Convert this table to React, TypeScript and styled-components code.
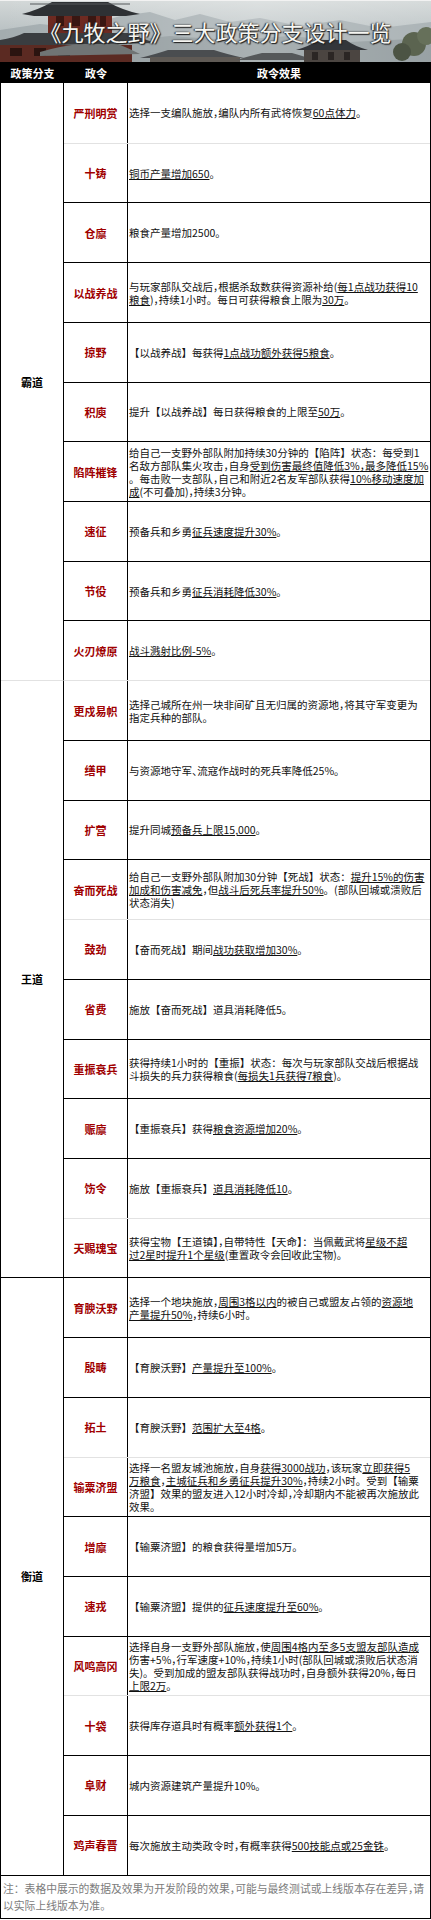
import React from 'react';
import styled, { createGlobalStyle } from 'styled-components';

const GlobalStyle = createGlobalStyle`
  html, body { margin: 0; padding: 0; background: #ffffff; }
  body { font-family: "Noto Sans CJK SC", "Noto Sans", sans-serif; }
`;

type LineKind = 'none' | 'dark' | 'faint';

const ROW_H = 1792 / 30;

const lineColor = (k: LineKind) =>
  k === 'none' ? 'none' : k === 'dark' ? '1px solid #000000' : '1px solid #e2e2e2';

const Page = styled.div`
  width: 431px;
  background: #ffffff;
`;

const Banner = styled.header`
  position: relative;
  height: 62px;
  overflow: hidden;
  display: flex;
  align-items: center;
  justify-content: center;
  background: #b9c0c2;
`;

const BannerArt = styled.svg`
  position: absolute;
  left: 0;
  top: 0;
  width: 100%;
  height: 100%;
`;

const Title = styled.h1`
  position: relative;
  margin: 0;
  font-family: "Noto Sans CJK SC", sans-serif;
  font-size: 22px;
  font-weight: 400;
  line-height: 1;
  color: #f6f6f2;
  white-space: nowrap;
  text-shadow: 0 0 2px #2a2a2a, 1px 1px 1px #1e1e1e, -1px 0 1px #3a3a3a;
  letter-spacing: 0;
`;

const Table = styled.section`
  border-left: 1px solid #000000;
  border-right: 1px solid #000000;
  border-bottom: 1px solid #000000;
`;

const HeaderRow = styled.div`
  display: flex;
  height: 21px;
  background: #000000;
  color: #ffffff;
  font-size: 11px;
  font-weight: 700;
`;

const HeaderCell = styled.div<{ $w?: number }>`
  ${(p) => (p.$w ? `width: ${p.$w}px;` : 'flex: 1;')}
  display: flex;
  align-items: center;
  justify-content: center;
`;

const Group = styled.div`
  display: flex;
`;

const GroupLabel = styled.div<{ $line: LineKind }>`
  width: 63px;
  flex-shrink: 0;
  box-sizing: border-box;
  border-right: 1px solid #000000;
  border-top: ${(p) => lineColor(p.$line)};
  display: flex;
  align-items: center;
  justify-content: center;
  font-size: 11px;
  font-weight: 700;
  color: #000000;
`;

const Rows = styled.div`
  flex: 1;
  display: flex;
  flex-direction: column;
`;

const Row = styled.div<{ $line: LineKind }>`
  display: flex;
  height: ${ROW_H}px;
  box-sizing: border-box;
  border-top: ${(p) => lineColor(p.$line)};
`;

const Name = styled.div`
  width: 64px;
  flex-shrink: 0;
  box-sizing: border-box;
  border-right: 1px solid #000000;
  display: flex;
  align-items: center;
  justify-content: center;
  color: #a00000;
  font-size: 11px;
  font-weight: 700;
`;

const Effect = styled.div`
  flex: 1;
  min-width: 0;
  display: flex;
  flex-direction: column;
  justify-content: center;
  padding: 0 1px 0 1px;
  font-size: 10.5px;
  line-height: 13px;
  color: #111111;
  white-space: nowrap;
  overflow: hidden;
`;

const Line = styled.div``;

const U = styled.span`
  text-decoration: underline;
  text-decoration-thickness: 1px;
  text-underline-offset: 1px;
`;

const Punct = styled.span`
  font-feature-settings: "halt";
`;

const Footer = styled.footer`
  height: 43px;
  box-sizing: border-box;
  border-top: 1px solid #000000;
  padding: 4px 2px 0 2px;
  font-size: 10.8px;
  line-height: 17px;
  color: #7c7c7c;
  white-space: nowrap;
`;

type Policy = { name: string; lines: string[]; line?: LineKind };
type Branch = { name: string; line: LineKind; items: Policy[] };

const branches: Branch[] = [
  {
    name: '霸道',
    line: 'none',
    items: [
      { name: '严刑明赏', lines: ['选择一支编队施放，编队内所有武将恢复_60点体力_。'] },
      { name: '十铸', lines: ['_铜币产量增加650_。'], line: 'faint' },
      { name: '仓廪', lines: ['粮食产量增加2500。'] },
      {
        name: '以战养战',
        lines: ['与玩家部队交战后，根据杀敌数获得资源补给(_每1点战功获得10', '粮食_)，持续1小时。每日可获得粮食上限为_30万_。'],
      },
      { name: '掠野', lines: ['【以战养战】每获得_1点战功额外获得5粮食_。'] },
      { name: '积庾', lines: ['提升【以战养战】每日获得粮食的上限至_50万_。'] },
      {
        name: '陷阵摧锋',
        lines: [
          '给自己一支野外部队附加持续30分钟的【陷阵】状态：每受到1',
          '名敌方部队集火攻击，自身_受到伤害最终值降低3%，最多降低15%_',
          '。每击败一支部队，自己和附近2名友军部队获得_10%移动速度加',
          '成_(不可叠加)，持续3分钟。',
        ],
      },
      { name: '速征', lines: ['预备兵和乡勇_征兵速度提升30%_。'] },
      { name: '节役', lines: ['预备兵和乡勇_征兵消耗降低30%_。'] },
      { name: '火刃燎原', lines: ['_战斗溅射比例-5%_。'] },
    ],
  },
  {
    name: '王道',
    line: 'faint',
    items: [
      {
        name: '更戍易帜',
        lines: ['选择己城所在州一块非间矿且无归属的资源地，将其守军变更为', '指定兵种的部队。'],
      },
      { name: '缮甲', lines: ['与资源地守军、流寇作战时的死兵率降低25%。'] },
      { name: '扩营', lines: ['提升同城_预备兵上限15,000_。'] },
      {
        name: '奋而死战',
        lines: [
          '给自己一支野外部队附加30分钟【死战】状态：_提升15%的伤害',
          '加成和伤害减免_，但_战斗后死兵率提升50%_。(部队回城或溃败后',
          '状态消失)',
        ],
      },
      { name: '鼓劲', lines: ['【奋而死战】期间_战功获取增加30%_。'], line: 'faint' },
      { name: '省费', lines: ['施放【奋而死战】道具消耗降低5。'] },
      {
        name: '重振衰兵',
        lines: ['获得持续1小时的【重振】状态：每次与玩家部队交战后根据战', '斗损失的兵力获得粮食(_每损失1兵获得7粮食_)。'],
      },
      { name: '赈廪', lines: ['【重振衰兵】获得_粮食资源增加20%_。'] },
      { name: '饬令', lines: ['施放【重振衰兵】_道具消耗降低10_。'] },
      {
        name: '天赐瑰宝',
        lines: ['获得宝物【王道镇】，自带特性【天命】：当佩戴武将_星级不超', '过2星时提升1个星级_(重置政令会回收此宝物)。'],
        line: 'faint',
      },
    ],
  },
  {
    name: '衡道',
    line: 'dark',
    items: [
      {
        name: '育腴沃野',
        lines: ['选择一个地块施放，_周围3格以内_的被自己或盟友占领的_资源地', '产量提升50%_，持续6小时。'],
      },
      { name: '殷畴', lines: ['【育腴沃野】_产量提升至100%_。'] },
      { name: '拓土', lines: ['【育腴沃野】_范围扩大至4格_。'] },
      {
        name: '输粟济盟',
        lines: [
          '选择一名盟友城池施放，自身_获得3000战功_，该玩家_立即获得5',
          '万粮食_，_主城征兵和乡勇征兵提升30%_，持续2小时。受到【输粟',
          '济盟】效果的盟友进入12小时冷却，冷却期内不能被再次施放此',
          '效果。',
        ],
        line: 'faint',
      },
      { name: '增廪', lines: ['【输粟济盟】的粮食获得量增加5万。'] },
      { name: '速戎', lines: ['【输粟济盟】提供的_征兵速度提升至60%_。'] },
      {
        name: '风鸣高冈',
        lines: [
          '选择自身一支野外部队施放，使_周围4格内至多5支盟友部队造成_',
          '伤害+5%，行军速度+10%，持续1小时(部队回城或溃败后状态消',
          '失)。受到加成的盟友部队获得战功时，自身额外获得20%，每日',
          '_上限2万_。',
        ],
      },
      { name: '十袋', lines: ['获得库存道具时有概率_额外获得1个_。'], line: 'faint' },
      { name: '阜财', lines: ['城内资源建筑产量提升10%。'] },
      { name: '鸡声春晋', lines: ['每次施放主动类政令时，有概率获得_500技能点或25金铢_。'] },
    ],
  },
];

// Narrow the comma-like punctuation, as the reference's font does.
function withPunct(text: string, keyBase: string) {
  return text.split(/([，、])/).map((piece, k) =>
    piece === '，' || piece === '、' ? (
      <Punct key={`${keyBase}-${k}`}>{piece}</Punct>
    ) : piece ? (
      <React.Fragment key={`${keyBase}-${k}`}>{piece}</React.Fragment>
    ) : null
  );
}

// Underline state carries across lines: text between "_" markers is underlined.
function renderLines(lines: string[]) {
  let underlined = false;
  return lines.map((ln, i) => {
    const parts = ln.split('_');
    const nodes = parts.map((part, j) => {
      if (j > 0) underlined = !underlined;
      if (!part) return null;
      const content = withPunct(part, `${i}-${j}`);
      return underlined ? <U key={j}>{content}</U> : <React.Fragment key={j}>{content}</React.Fragment>;
    });
    return <Line key={i}>{nodes}</Line>;
  });
}

const BannerScene: React.FC = () => (
  <BannerArt viewBox="0 0 431 62" preserveAspectRatio="none" aria-hidden="true">
    <defs>
      <linearGradient id="sky" x1="0" y1="0" x2="0" y2="1">
        <stop offset="0" stopColor="#d3d8d8" />
        <stop offset="0.55" stopColor="#b7bfc1" />
        <stop offset="1" stopColor="#9aa3a5" />
      </linearGradient>
      <linearGradient id="mist" x1="0" y1="0" x2="1" y2="0">
        <stop offset="0" stopColor="#ffffff" stopOpacity="0" />
        <stop offset="0.6" stopColor="#ffffff" stopOpacity="0.25" />
        <stop offset="1" stopColor="#ffffff" stopOpacity="0.1" />
      </linearGradient>
    </defs>
    <rect x="0" y="0" width="431" height="62" fill="url(#sky)" />
    <path d="M0 30 L40 24 L80 28 L120 16 L150 12 L175 20 L200 14 L230 22 L260 18 L300 26 L340 20 L380 28 L431 22 L431 62 L0 62 Z" fill="#a3acaf" />
    <path d="M0 44 L50 38 L110 42 L170 36 L230 40 L290 36 L350 42 L431 38 L431 62 L0 62 Z" fill="#8d979a" />
    <rect x="0" y="0" width="431" height="62" fill="url(#mist)" />
    {/* left tower */}
    <rect x="48" y="10" width="64" height="30" fill="#6d2a21" />
    <rect x="56" y="16" width="8" height="10" fill="#3a1712" />
    <rect x="72" y="16" width="8" height="10" fill="#3a1712" />
    <rect x="88" y="16" width="8" height="10" fill="#3a1712" />
    <rect x="100" y="16" width="6" height="10" fill="#3a1712" />
    <path d="M22 14 Q38 10 52 2 L108 2 Q122 10 140 14 L126 16 L34 16 Z" fill="#2e3134" />
    <path d="M30 4 L130 4" stroke="#55585a" strokeWidth="1" />
    <path d="M0 40 Q14 38 24 33 L128 33 Q140 38 156 43 L0 46 Z" fill="#3a3d40" />
    <rect x="0" y="45" width="132" height="17" fill="#5b2a22" />
    <rect x="10" y="48" width="12" height="8" fill="#2b1410" />
    <rect x="34" y="48" width="12" height="8" fill="#2b1410" />
    <rect x="58" y="48" width="12" height="8" fill="#2b1410" />
    <path d="M40 52 Q60 46 80 44 L118 44 Q128 48 140 54 L40 56 Z" fill="#707474" />
    {/* low roofs across the bottom */}
    <path d="M140 58 Q156 54 168 50 L214 50 Q226 54 244 58 Z" fill="#4a4d50" />
    <rect x="150" y="57" width="90" height="5" fill="#5f5a55" />
    <path d="M236 60 Q250 56 262 53 L292 53 Q302 56 316 60 Z" fill="#55585a" />
    {/* right hall */}
    <path d="M296 50 Q310 46 318 40 L346 40 Q354 46 368 50 Z" fill="#33363a" />
    <rect x="304" y="50" width="56" height="12" fill="#4b4541" />
    <rect x="312" y="52" width="6" height="8" fill="#2b2624" />
    <rect x="328" y="52" width="6" height="8" fill="#2b2624" />
    <rect x="344" y="52" width="6" height="8" fill="#2b2624" />
    {/* tree on the right */}
    <circle cx="414" cy="44" r="12" fill="#5b6450" />
    <circle cx="426" cy="36" r="9" fill="#66705a" />
    <circle cx="402" cy="52" r="9" fill="#4c5444" />
    <rect x="0" y="0" width="431" height="1" fill="#f2f2f2" />
  </BannerArt>
);

export default function App() {
  return (
    <Page>
      <GlobalStyle />
      <Banner>
        <BannerScene />
        <Title>《九牧之野》三大政策分支设计一览</Title>
      </Banner>
      <Table>
        <HeaderRow>
          <HeaderCell $w={63}>政策分支</HeaderCell>
          <HeaderCell $w={64}>政令</HeaderCell>
          <HeaderCell>政令效果</HeaderCell>
        </HeaderRow>
        {branches.map((b) => (
          <Group key={b.name}>
            <GroupLabel $line={b.line}>{b.name}</GroupLabel>
            <Rows>
              {b.items.map((it, i) => (
                <Row key={it.name} $line={i === 0 ? b.line : it.line ?? 'dark'}>
                  <Name>{it.name}</Name>
                  <Effect>{renderLines(it.lines)}</Effect>
                </Row>
              ))}
            </Rows>
          </Group>
        ))}
        <Footer>
          <div>注：表格中展示的数据及效果为开发阶段的效果{withPunct('，', 'f1')}可能与最终测试或上线版本存在差异{withPunct('，', 'f2')}请</div>
          <div>以实际上线版本为准。</div>
        </Footer>
      </Table>
    </Page>
  );
}
